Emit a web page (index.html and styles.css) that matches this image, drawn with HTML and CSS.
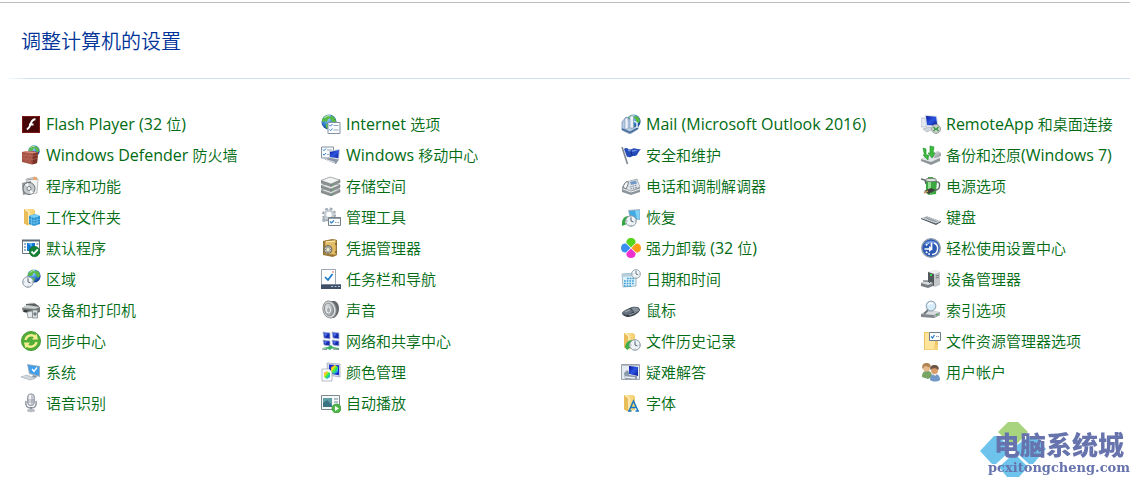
FILE: index.html
```html
<!DOCTYPE html>
<html lang="zh-CN">

<head>
  <meta charset="UTF-8">
  <meta name="viewport" content="width=device-width, initial-scale=1.0">
  <title>所有控制面板项</title>

  <link rel="stylesheet" href="styles.css">
</head>

<body>

  <!-- shared gradients and icon parts -->
  <svg class="defs" aria-hidden="true">
    <defs>
      <radialGradient id="sea" cx=".4" cy=".3" r=".7">
        <stop offset="0" stop-color="#a9ddfb" />
        <stop offset=".5" stop-color="#3b86d8" />
        <stop offset="1" stop-color="#123a94" />
      </radialGradient>
      <linearGradient id="screen" x2="1" y2="1">
        <stop offset="0" stop-color="#08149c" />
        <stop offset=".5" stop-color="#2c55e0" />
        <stop offset="1" stop-color="#0a1c98" />
      </linearGradient>
      <linearGradient id="metal" x2="1" y2="1">
        <stop offset="0" stop-color="#f4f5f6" />
        <stop offset="1" stop-color="#83888d" />
      </linearGradient>
      <linearGradient id="paper" x2="1">
        <stop offset="0" stop-color="#ffebad" />
        <stop offset="1" stop-color="#f4cc68" />
      </linearGradient>
      <linearGradient id="rainbow" x2="1" y2="1">
        <stop offset="0" stop-color="#f22" />
        <stop offset=".3" stop-color="#fd2" />
        <stop offset=".55" stop-color="#3e4" />
        <stop offset=".8" stop-color="#2ae" />
        <stop offset="1" stop-color="#a2e" />
      </linearGradient>
    </defs>
    <symbol id="globe" viewBox="0 0 14 14">
      <circle cx="7" cy="7" r="6.6" fill="url(#sea)" />
      <path d="M2 3.200 5 .8l2.400.5.8 2-2 1.200L5 7 2.600 6.400 1 7.500.8 5zM9 1.200l3 2 1.200 3-1.700 2.500-1.800-1-.7-2.500-1.300-1.200zM4 8.500l3.200.6.8 1.900-2 2.300-1.600-1.500z" fill="#58b947" />
      <path d="M3 3.500Q5 1 8 1.500" fill="none" stroke="#fff" stroke-opacity=".6" />
    </symbol>
    <symbol id="folder" viewBox="0 0 14 18">
      <path d="M1 1h9l2 1.500V16L5 17.500 1 15.500z" fill="url(#paper)" />
      <path d="M1 1l4 3v13.500l-4-2z" fill="#e9bd59" />
      <path d="M2 1.500l4 2.800V14" fill="none" stroke="#fff2c9" />
    </symbol>
    <symbol id="checklist" viewBox="0 0 13 12">
      <path d="M.5.5h12v11H.5z" fill="#fafcfe" stroke="#8393a5" />
      <path d="M2 3l1 1.200L5 2M2 7.500l1 1.200 2-2.200" fill="none" stroke="#2c7fd0" />
      <path d="M6 3.500h5M6 8h5" stroke="#97a8b8" />
    </symbol>
    <symbol id="clock" viewBox="0 0 12 12">
      <circle cx="6" cy="6" r="5.300" fill="#eef3f7" stroke="#8b9aa7" />
      <path d="M6 2.500V6l2.500 1" fill="none" stroke="#53606c" />
      <path d="M6 1.500v1M6 9.700v1M1.500 6h1M9.700 6h1" stroke="#6e7b86" stroke-width=".7" />
    </symbol>
  </svg>

  <main class="panel">

    <header class="panel-head">
      <h1>调整计算机的设置</h1>
    </header>

    <nav class="items" aria-label="控制面板项">

      <a class="item" href="#">
        <svg viewBox="0 0 20 20"><path d="M1 2h18v17H1z" fill="#460507" /><path d="M1.500 2.500h17v16h-17z" fill="none" stroke="#7c1714" /><path d="M14.500 5.300c-3 .1-3.800 1.700-4.700 4.300-.9 2.600-1.600 5-4 5.600M8 10.500h4.500" fill="none" stroke="#fff" stroke-width="2" /></svg>
        <span><span class="en">Flash Player (32 </span>位<span class="en">)</span></span>
      </a>
      <a class="item" href="#">
        <svg viewBox="0 0 20 20"><use href="#globe" x="0" y="0" width="16" height="16" /><path d="M7 9h13v10H7z" fill="#fff" /><use href="#checklist" x="6" y="8" width="14" height="12" /></svg>
        <span><span class="en">Internet </span>选项</span>
      </a>
      <a class="item" href="#">
        <svg viewBox="0 0 20 20"><use href="#globe" x="5" y="0" width="15" height="15" /><path d="M1 8l4-5 5 3v8l7-2v3l-8 5-8-4z" fill="#b6cce4" stroke="#6c87ab" stroke-width=".7" /><path d="M4 4h3v11H4zM9 2h3.500v12H9z" fill="#f7fbff" stroke="#7b95b8" stroke-width=".7" /><path d="M1 15l8 3.500 8-4.500" fill="none" stroke="#426997" stroke-width="1.500" /><path d="M6 7v6M11 5v7M13 7l3 2v5" fill="none" stroke="#e4eef9" stroke-width="1.500" /></svg>
        <span class="en">Mail (Microsoft Outlook 2016)</span>
      </a>
      <a class="item" href="#">
        <svg viewBox="0 0 20 20"><path d="M0 4h6v9H0z" fill="#e4e8ef" stroke="#aeb7c6" stroke-width=".7" /><path d="M4 1l12 1 1.500 11L5 12z" fill="#ced6e4" /><path d="M5 2l10 .8 1.300 8.700L6 11z" fill="url(#screen)" /><path d="M2 15l7-2 3 2-6 3z" fill="#d5d9df" stroke="#9ba3af" stroke-width=".6" /><circle cx="15" cy="15" r="4.500" fill="#c9cec9" stroke="#8e9690" stroke-width=".8" /><path d="M12.500 13l2 2-2 2M17.500 13l-2 2 2 2" fill="none" stroke="#2b9538" stroke-width="1.200" /></svg>
        <span><span class="en">RemoteApp </span>和桌面连接</span>
      </a>

      <a class="item" href="#">
        <svg viewBox="0 0 20 20"><use href="#globe" x="7" y="0" width="12" height="12" /><path d="M1 7l11-1 5 1.500-1 10.500-5 1.500L1 17z" fill="#a45143" /><path d="M12 7l5 .5-1 10.500-4.500 1.500z" fill="#7a3228" /><path d="M1 7l4-1 12 1.500-5 1z" fill="#d98c79" /><path d="M1 10l11 1M1 13.500l11 1M5 7.500v3M8.500 8v3M3 10.500v3M7 11v3M10 11v3M5 14v3M8.500 14.500v3M12 11l5-1.500M12 14.500l4.500-1.500" stroke="#c47b6b" stroke-width=".5" /></svg>
        <span><span class="en">Windows Defender </span>防火墙</span>
      </a>
      <a class="item" href="#">
        <svg viewBox="0 0 20 20"><use href="#checklist" x="0" y="1" width="13" height="13" /><path d="M8 6l11-2-1 10-10-1z" fill="#c2cbd8" /><path d="M9 7l9-2-.8 8L9 12z" fill="url(#screen)" /><path d="M3 14l6-1 9 1.500-3 4.500z" fill="#8d97a7" /><path d="M5 14.500l9 3" stroke="#dfe5ec" /></svg>
        <span><span class="en">Windows </span>移动中心</span>
      </a>
      <a class="item" href="#">
        <svg viewBox="0 0 20 20"><path d="M1 2l5.500 17" stroke="#7f8793" stroke-width="1.600" /><path d="M3 4c3-3 5 2 8 0s4 1 9 0c-2 2-3 4-4 6-3 2-4 0-6 2-2 1-3-1-4 0z" fill="#244bb7" /><path d="M7 4c2 0 3 2 5 1 2 0 3 0 5 0-3 2-6 2-10 1z" fill="#7392e7" /><path d="M10 5l1 6" stroke="#102c86" /></svg>
        <span>安全和维护</span>
      </a>
      <a class="item" href="#">
        <svg viewBox="0 0 20 20"><path d="M0 14l9-4 10 3v3l-9 4-10-4z" fill="#8f969a" /><path d="M0 14l9-4 10 3-9 4z" fill="#e0e4e6" /><path d="M10 8l7-2 3 2v3l-6 2-4-2z" fill="url(#metal)" /><path d="M2 3l3 1v6h2.500L7 15 2 10h1.500zM9 1l4 1-1 6h2l-3 5-4-5h2z" fill="#3ebd3d" stroke="#178a25" stroke-width=".6" /></svg>
        <span>备份和还原<span class="en">(Windows 7)</span></span>
      </a>

      <a class="item" href="#">
        <svg viewBox="0 0 20 20"><path d="M5 3l9-2 3 2-1 14-8 1z" fill="#f2f3f3" stroke="#a9acae" stroke-width=".8" /><path d="M6 4l9-1.500" stroke="#8e9295" /><path d="M1 7l9-2v12l-8 2z" fill="#909598" /><circle cx="8" cy="12.500" r="6" fill="#c5cacc" stroke="#686e71" /><path d="M8 12.500L4 8.500l3-1.500zM8 12.500l4.500 4-3 1.500z" fill="#fafcfc" /><circle cx="8" cy="12.500" r="2" fill="#f8f8f8" stroke="#74797c" /><path d="M12 1h4v3h-4z" fill="#e8a675" /></svg>
        <span>程序和功能</span>
      </a>
      <a class="item" href="#">
        <svg viewBox="0 0 20 20"><g stroke="#777c7e" stroke-width=".6"><path d="M0 14.500l10 3.500v2L0 16.500zM10 18l9-4v2l-9 4z" fill="#8c9292" /><path d="M0 14l9-3 10 2.500-9 4z" fill="#e3e7e7" /><path d="M0 9.500L10 13v2.500L0 12zM10 13l9-4v2.500l-9 4z" fill="#8c9292" /><path d="M0 9.500l9-3L19 9l-9 4z" fill="#e3e7e7" /><path d="M0 4.500L10 8v2.500L0 7zM10 8l9-4v2.500l-9 4z" fill="#8c9292" /><path d="M0 4.500L9 1l10 3-9 4z" fill="#f2f4f4" /></g><path d="M12 8.500v1M12 13.500v1M12 18v1" stroke="#38b54a" stroke-width="1.300" /></svg>
        <span>存储空间</span>
      </a>
      <a class="item" href="#">
        <svg viewBox="0 0 20 20"><path d="M1 12l4-6 11-3 3 9v4l-9 3-9-3z" fill="#8d959c" /><path d="M1 12l4-6 11-3 3 8-9 4z" fill="#dfe4e8" stroke="#8f979f" stroke-width=".6" /><path d="M9 6l6-1.500 1 3-6 1.500z" fill="#6f9bc8" /><path d="M2 11c2-5 4-6 5-5s-1 5-2 7z" fill="#f7f9fa" stroke="#72797f" /><path d="M9 11l7-2M9.500 13l7-2" stroke="#7c858e" stroke-dasharray="1.500 1" /><path d="M2 13l8 3 9-3" fill="none" stroke="#f2f4f5" /></svg>
        <span>电话和调制解调器</span>
      </a>
      <a class="item" href="#">
        <svg viewBox="0 0 20 20"><path d="M5 4l2-1V1h5v2l4 2-1 13-7 1-3-2z" fill="#3aa83f" /><path d="M7 3h3v15l-3-1z" fill="#91df8e" /><ellipse cx="10" cy="4" rx="5.500" ry="1.800" fill="#dce2dd" stroke="#727d75" /><path d="M0 3l4 1 1 4M15 6c4-1 4 3 3 6s-6 2-9 3" fill="none" stroke="#5d6667" stroke-width="1.400" /><path d="M3 15l7-3 4 2-6 4z" fill="#3b3b37" /><path d="M3 17l4-2" stroke="#c59a5b" stroke-width="1.500" /></svg>
        <span>电源选项</span>
      </a>

      <a class="item" href="#">
        <svg viewBox="0 0 20 20"><use href="#folder" x="2" y="1" width="14" height="18" /><path d="M8 9l6-2 5 2v8l-6 2-5-2z" fill="#238fd0" /><path d="M8 9l6-2 5 2-6 2z" fill="#76cdf3" /><path d="M8 12l5 2 6-2M8 14.500l5 2 6-2M10.500 10v8M13 11v8M16 10v8" fill="none" stroke="#8bd1f2" stroke-width=".6" /></svg>
        <span>工作文件夹</span>
      </a>
      <a class="item" href="#">
        <svg viewBox="0 0 20 20"><circle cx="8" cy="7.500" r="5.500" fill="none" stroke="#9da7b0" stroke-width="3" stroke-dasharray="2.500 1.820" /><circle cx="8" cy="7.500" r="4" fill="none" stroke="#c3cbd2" stroke-width="2.500" /><circle cx="3" cy="13" r="2" fill="#a9b2ba" /><path d="M7.500 10.500h12v8h-12z" fill="#fbfcfc" stroke="#74818b" /><path d="M7.500 11h12" stroke="#74818b" stroke-width="1.500" /><path d="M9 14.500l1.500 1.500L13 13.500" fill="none" stroke="#277fc7" stroke-width="1.200" /><path d="M14 15.500h4" stroke="#9ba7b0" stroke-dasharray="1.500 1" /></svg>
        <span>管理工具</span>
      </a>
      <a class="item" href="#">
        <svg viewBox="0 0 20 20"><path d="M7 3l12-1v11l-10-1z" fill="#a6b5c2" /><path d="M8 4l10.500-1v9.500L9.500 11z" fill="#3faae4" /><path d="M14 3.500l4.500-.5v9.500L16 12z" fill="#83d1f5" /><path d="M1 15c1-4 3-6 7-6l-1 3c-2 0-3 2-3 4l2 1-5 2z" fill="#33a63f" /><use href="#clock" x="4" y="8" width="12" height="12" /></svg>
        <span>恢复</span>
      </a>
      <a class="item" href="#">
        <svg viewBox="0 0 20 20"><path d="M0 11l6-2 14 5-5 3z" fill="#d5d9dc" /><path d="M0 11l15 5.500 5-2.500v1l-5 3L0 12z" fill="#4d575d" /><path d="M3 11l4-1.200M5 12l4-1.500M7 12.700l4-1.500M9 13.500l4-1.500M11 14l4-1.200M13 15l4-1.500M4 10.500l12 4.500" stroke="#7d898f" stroke-width=".6" /></svg>
        <span>键盘</span>
      </a>

      <a class="item" href="#">
        <svg viewBox="0 0 20 20"><path d="M1.500 2.500h17v13h-17z" fill="#fff" stroke="#69747d" /><path d="M1 2.500h18" stroke="#5e6c78" stroke-width="2" /><path d="M6 5h8v8H6z" fill="#1379d1" /><path d="M7 5l4 4V5z" fill="#58b4ee" /><path d="M3 6h2M3 9h2M3 12h2M15.500 6h2" stroke="#7a99b4" stroke-width="1.300" /><circle cx="13.500" cy="13.500" r="5.200" fill="#128336" stroke="#0b6426" stroke-width=".6" /><path d="M10.500 13.500l2.300 2.300 4-4.500" fill="none" stroke="#fff" stroke-width="1.800" /></svg>
        <span>默认程序</span>
      </a>
      <a class="item" href="#">
        <svg viewBox="0 0 20 20"><path d="M2 3l9-2 5 1v15l-4 2-10-2z" fill="#967539" /><path d="M4 3l11-1v15L4 16z" fill="#e3bd66" stroke="#aa8137" stroke-width=".7" /><path d="M5 4l9-1" stroke="#fff0bc" /><circle cx="7" cy="11.500" r="4" fill="#d3d3c9" stroke="#6b685b" /><path d="M4.500 9l5 5M9.500 9l-5 5M7 8v7M3.500 11.500h7" stroke="#716a50" stroke-width=".8" /><circle cx="7" cy="11.500" r="1.500" fill="#f5f1da" /><path d="M15 5v2M15 13v2" stroke="#775c29" stroke-width="1.500" /></svg>
        <span>凭据管理器</span>
      </a>
      <a class="item" href="#">
        <svg viewBox="0 0 20 20"><path d="M10 9.500L5.500 5C5 2 7 0 10 0s5 2 4.500 5z" fill="#57d51b" /><path d="M10 10.500L5.500 15c-.5 3 1.500 5 4.500 5s5-2 4.500-5z" fill="#ed2fd0" /><path d="M9.500 10L5 5.500C2 5 0 7 0 10s2 5 5 4.500z" fill="#3a8df2" /><path d="M10.500 10L15 5.500c3-.5 5 1.500 5 4.500s-2 5-5 4.500z" fill="#ff9c16" /></svg>
        <span>强力卸载<span class="en"> (32 </span>位<span class="en">)</span></span>
      </a>
      <a class="item" href="#">
        <svg viewBox="0 0 20 20"><circle cx="10" cy="10" r="9.300" fill="#2c59b3" stroke="#929fae" stroke-width="1.300" /><path d="M3 7a8 8 0 0 1 14 0q-7-3-14 0z" fill="#6a94df" /><path d="M3.500 11H10M10.500 10V4.500" fill="none" stroke="#fff" stroke-width="1.700" /><path d="M8 8l4 3-4 3z" fill="#fff" /><path d="M13 5a6 6 0 0 1-2 11.500" fill="none" stroke="#fff" stroke-width="1.500" /><path d="M5 13.500a6 6 0 0 0 4 2.700M5 7.500l2.500-2.500" fill="none" stroke="#fff" stroke-width="1.500" stroke-dasharray="2 1" /></svg>
        <span>轻松使用设置中心</span>
      </a>

      <a class="item" href="#">
        <svg viewBox="0 0 20 20"><use href="#globe" x="6" y="0" width="14" height="14" /><use href="#clock" x="1" y="7" width="12" height="12" /></svg>
        <span>区域</span>
      </a>
      <a class="item" href="#">
        <svg viewBox="0 0 20 20"><path d="M.5.500h14v16H.5z" fill="#fff" stroke="#9ca7b2" /><path d="M4 8l3 3 4.500-6" fill="none" stroke="#1679c9" stroke-width="1.700" /><path d="M11 3h2" stroke="#df6466" /><path d="M0 15h20v5H0z" fill="#3f5066" /><path d="M0 15h20v1H0z" fill="#73849b" /><path d="M10 17.500h2M13.500 17.500h2M17 17.500h2" stroke="#b4c3d2" /></svg>
        <span>任务栏和导航</span>
      </a>
      <a class="item" href="#">
        <svg viewBox="0 0 20 20"><path d="M1 5l14-1v13l-13 1z" fill="#dff1fa" stroke="#8ca6b5" stroke-width=".8" /><path d="M1 5l14-1v3L1.500 8z" fill="#b7cfdd" /><path d="M6 9.500h7M3 12h10M3 14.500h10M3 17h7" stroke="#379ed4" stroke-width="1.700" stroke-dasharray="1.700 1" /><use href="#clock" x="10" y="0" width="10" height="10" /></svg>
        <span>日期和时间</span>
      </a>
      <a class="item" href="#">
        <svg viewBox="0 0 20 20"><path d="M7 3l8-2 4 2v13l-5 2-7-3z" fill="#c3c7ca" /><path d="M7 3l8-2 4 2-6 2z" fill="#eff1f2" /><path d="M7 3l6 2v12l-6-2z" fill="#51585b" /><path d="M9 6h2" stroke="#39d54c" stroke-width="2" /><path d="M15 7l3-1M15 9l3-1" stroke="#747a80" /><path d="M0 14l6-2 6 2v3l-5 2-7-2z" fill="#777e83" /><path d="M0 14l6-2 6 2-5 2z" fill="#d7dadd" /><path d="M2 12h5l2 2" fill="none" stroke="#4e565d" /></svg>
        <span>设备管理器</span>
      </a>

      <a class="item" href="#">
        <svg viewBox="0 0 20 20"><path d="M5 4l8-1 5 3v4l-7 1-6-3z" fill="#59605f" /><path d="M1 8l5-3 13 2v5l-5 2-12-2z" fill="#6e7472" /><path d="M1 8l5-3 13 2-5 2z" fill="#c9cfcd" /><path d="M3 11l8 1" stroke="#303534" stroke-width="2" /><path d="M6 12l5-1 1 6-5 1z" fill="#e6eaec" stroke="#8b9599" stroke-width=".8" /><path d="M11.500 10h5v8h-5z" fill="#dbe0e2" stroke="#7c8588" stroke-width=".8" /><circle cx="14" cy="14" r="1.700" fill="#6e7b83" /><path d="M9 3l4 0" stroke="#d2d8d7" /></svg>
        <span>设备和打印机</span>
      </a>
      <a class="item" href="#">
        <svg viewBox="0 0 20 20"><path d="M9 1h5c3 2 4 4 4 8s-2 7-5 9H9z" fill="#62686c" /><ellipse cx="8.500" cy="9.500" rx="6.500" ry="8.600" transform="rotate(-12 8.500 9.500)" fill="#dde0e1" stroke="#8c9195" /><ellipse cx="8" cy="9.500" rx="4.500" ry="6.500" transform="rotate(-12 8 9.500)" fill="url(#metal)" stroke="#777d81" stroke-width=".8" /><ellipse cx="7.500" cy="10" rx="2" ry="3" fill="#a5abae" stroke="#eef0f1" /></svg>
        <span>声音</span>
      </a>
      <a class="item" href="#">
        <svg viewBox="0 0 20 20"><path d="M1 13c1-2 5-4 10-6 4-1 8 0 8 3-1 3-6 6-11 7-4 0-7-2-7-4z" fill="#39434e" /><path d="M1 12.500c2-2 5-3 8-4l3 3c-3 3-6 4-8 3-2 0-3-1-3-2z" fill="#66727e" /><path d="M10 8c4-2 8 0 8 1-1 2-3 3-5 3z" fill="#84909b" /><path d="M4 12l5-2M8 15c4-1 8-3 10-5" fill="none" stroke="#c0cad2" stroke-width=".7" /></svg>
        <span>鼠标</span>
      </a>
      <a class="item" href="#">
        <svg viewBox="0 0 20 20"><path d="M0 14l6-3 13 1v3l-6 3-13-1z" fill="#80868b" /><path d="M0 14l6-3 13 1-6 3z" fill="#d9dddf" /><path d="M13 15l6-3v3l-6 3z" fill="#a7aeb2" /><circle cx="10" cy="6" r="4.800" fill="#d7edfb" stroke="#9aadbb" stroke-width="1.200" /><path d="M7 5q2-3 5-1" fill="none" stroke="#fff" stroke-width="1.300" /><path d="M7 10l-4 4" stroke="#707a80" stroke-width="2" /><path d="M15 15l2-1" stroke="#32aa48" stroke-width="1.300" /></svg>
        <span>索引选项</span>
      </a>

      <a class="item" href="#">
        <svg viewBox="0 0 20 20"><circle cx="10" cy="10" r="9.500" fill="#50ae39" stroke="#459a30" /><path d="M4.500 9A6 6 0 0 1 14 5.500M15.500 11A6 6 0 0 1 6 14.500" fill="none" stroke="#f7ed91" stroke-width="2.300" /><path d="M11 8.500h6l-1.500-6zM9 11.500H3l1.500 6z" fill="#f7ed91" /></svg>
        <span>同步中心</span>
      </a>
      <a class="item" href="#">
        <svg viewBox="0 0 20 20"><path d="M2 1l7 1v6L3 7zM11 1l7 1v6l-6-1zM2 9l7 1v5l-6-1zM11 9l7 1v5l-6-1z" fill="#182bb0" stroke="#a6b5d0" stroke-width=".8" /><path d="M3 2l4 .6L4 6zM12 2l4 .6-3 3.400zM3 10l4 .6-3 2.400zM12 10l4 .6-3 2.400z" fill="#5272ea" /><path d="M1 17l6-1 3-2 2 2 6 1v1l-7-.5-2 1.500-2-1z" fill="#3caf62" /><path d="M1 18l5 .5M12 18l6 .5" stroke="#73848a" /></svg>
        <span>网络和共享中心</span>
      </a>
      <a class="item" href="#">
        <svg viewBox="0 0 20 20"><use href="#folder" x="2" y="1" width="14" height="18" /><path d="M4 16c1-4 3-7 7-7v3c-3 0-3 2-3 4h2l-4 3z" fill="#3dae4d" /><use href="#clock" x="8" y="8" width="12" height="12" /></svg>
        <span>文件历史记录</span>
      </a>
      <a class="item" href="#">
        <svg viewBox="0 0 20 20"><path d="M3 1h12l2 2v16H3z" fill="#ecc568" /><path d="M4 2h10v16H4z" fill="#ffe49b" /><path d="M4 18h9v-4h4v5H4z" fill="#f5d17a" /><path d="M8.500 1.500h11v8h-11z" fill="#fff" stroke="#6c7d8c" /><path d="M10 5.500l1.500 1.500 2-3" fill="none" stroke="#277bd0" stroke-width="1.300" /><path d="M15 5.500h3" stroke="#8799a9" stroke-dasharray="1.200 .6" /></svg>
        <span>文件资源管理器选项</span>
      </a>

      <a class="item" href="#">
        <svg viewBox="0 0 20 20"><path d="M6 2l13 2v11L8 12z" fill="#9dadb9" /><path d="M7 3l11 1.700v8.800L9 11z" fill="#3f9fed" /><path d="M11 7l2 2.500 3-4" fill="none" stroke="#fff" stroke-width="1.300" /><path d="M12 13l4 1-1 2-4-1z" fill="#8998a4" /><path d="M0 15l6-2 8 3.500L9 18z" fill="#e4e9ec" stroke="#9fabb4" stroke-width=".7" /><path d="M3 15l8 2M5 14l7 2" stroke="#b5c0c6" stroke-width=".6" /></svg>
        <span>系统</span>
      </a>
      <a class="item" href="#">
        <svg viewBox="0 0 20 20"><path d="M6 1l13 1v13L7 13z" fill="#dce1e8" stroke="#98a4b2" stroke-width=".7" /><path d="M8 2.500l10 .8v10L8 11.500z" fill="#1630cf" /><path d="M10 5l4-2 3 2v5l-4 2-3-2z" fill="url(#rainbow)" /><path d="M1 7h7l3 3v9H1z" fill="#fafcff" stroke="#a5afba" stroke-width=".8" /><path d="M3 11l3-2 3 2v4l-3 2-3-2z" fill="url(#rainbow)" /></svg>
        <span>颜色管理</span>
      </a>
      <a class="item" href="#">
        <svg viewBox="0 0 20 20"><path d="M.5 2.500h18v15H.5z" fill="#e6ebf1" stroke="#9aa2aa" /><path d="M1 3.500h17" stroke="#b5bdc5" /><path d="M8 4l9 1v9l-9-2z" fill="url(#screen)" /><path d="M3 11l3-3 2 2v3l8 1v3H4z" fill="#8b98a9" /><path d="M4 15l10 1" stroke="#edf1f5" stroke-width="1.500" /></svg>
        <span>疑难解答</span>
      </a>
      <a class="item" href="#">
        <svg viewBox="0 0 20 20"><path d="M1 15c0-5 2-6 5-6s5 1 5 6l-4 2z" fill="#78a563" /><circle cx="5.500" cy="6" r="3.500" fill="#e7b98d" /><path d="M1.500 7c-1-4 1-6 4-6s5 2 4 5C8 5 6 4 4 4z" fill="#b18454" /><path d="M9 18c0-4 2-6 5-6s5 2 5 6c-3 2-7 2-10 0z" fill="#7298c5" /><circle cx="13.500" cy="8.500" r="3.500" fill="#d99c6b" /><path d="M9.500 8c-1-3 1-5 4-5s5 2 4 5c-2-2-5-2-7-1z" fill="#6c5645" /><path d="M12 12l2 2 2-2" fill="#f6eee7" /></svg>
        <span>用户帐户</span>
      </a>

      <a class="item" href="#">
        <svg viewBox="0 0 20 20"><path d="M5 8c-1 5 1 7 5 7s6-2 5-7" fill="none" stroke="#8d949d" stroke-width="1.500" /><path d="M9 14h2v3H9z" fill="#838a92" /><ellipse cx="10" cy="17.500" rx="4" ry="1.700" fill="#b8bcc3" /><rect x="6.500" y=".8" width="7" height="12" rx="3.500" fill="#c6c8d2" stroke="#8a8e99" stroke-width=".8" /><path d="M9 2v9" stroke="#fff" stroke-width="1.500" /><path d="M7 7h6M7 9h6" stroke="#888e99" stroke-width=".7" /></svg>
        <span>语音识别</span>
      </a>
      <a class="item" href="#">
        <svg viewBox="0 0 20 20"><path d="M.5 2.500h18v14H.5z" fill="#f6f8f9" stroke="#7c8991" /><path d="M2 5h9v9H2z" fill="#5f9fa5" /><path d="M2 10l4-3 5 5v2H2z" fill="#3b7482" /><path d="M13 6h4M13 9h4" stroke="#9badb5" stroke-width="1.500" /><circle cx="15.500" cy="15.500" r="4.500" fill="#4eb846" stroke="#348f31" stroke-width=".7" /><path d="M14 13l4 2.500-4 2.500z" fill="#fff" /></svg>
        <span>自动播放</span>
      </a>
      <a class="item" href="#">
        <svg viewBox="0 0 20 20"><use href="#folder" x="2" y="1" width="14" height="18" /><path d="M8 18L12.500 8l4.500 10M10 14.500h5M7 18h3.500M14.500 18H18" fill="none" stroke="#1878c1" stroke-width="1.500" /></svg>
        <span>字体</span>
      </a>

    </nav>

  </main>

  <div class="watermark">
    <svg viewBox="0 0 150 56" aria-hidden="true">
      <path d="M28 1h10l10 10-11 12H30L18 11z" fill="#a9d47f" />
      <path d="M14 15h4l10 9v8L16 43h-4L0 30z" fill="#6dc3ec" />
      <path d="M50 15h4l12 13-13 15h-4L37 32v-8z" fill="#6dc3ec" />
      <path d="M30 36h8l10 10-9 10H27l-8-10z" fill="#6dc3ec" />
    </svg>
    <span class="mark-name">电脑系统城</span>
    <span class="mark-site">pcxitongcheng.com</span>
  </div>

</body>

</html>
```
FILE: styles.css
```css
* {
  box-sizing: border-box;
}

body {
  margin: 0;
  padding-top: 2px;
  background-color: #fff;
  font-family: "Open Sans", "Noto Sans CJK SC", sans-serif;
  font-size: 15px;
}

.defs {
  position: absolute;
  width: 0;
  height: 0;
}

.panel {
  border-top: 1px solid #bcbcbc;
}

.panel-head {
  padding: 23px 21px 21px;
  border-bottom: 1px solid;
  border-image: linear-gradient(to right, #fff 5px, #cfe0f3 30px) 1;
}

.panel-head h1 {
  margin: 0;
  color: #003399;
  font-size: 20px;
  font-weight: 350;
  line-height: 31px;
}

/* last column only needs the width of its longest label */
.items {
  display: grid;
  grid-template-columns: repeat(3, 1fr) 209px;
  padding: 29px 0 60px 21px;
}

.item {
  display: flex;
  align-items: center;
  gap: 5px;
  height: 31px;
  color: #006b12;
  font-weight: 350;
  text-decoration: none;
  white-space: nowrap;
}

.item:hover {
  text-decoration: underline;
}

.item svg {
  flex: none;
  width: 20px;
  height: 20px;
}

.en {
  font-size: 16px;
  font-weight: 400;
}

.watermark {
  position: fixed;
  right: 0;
  bottom: 0;
  display: flex;
  flex-direction: column;
  align-items: flex-end;
  width: 150px;
  padding-top: 8px;
  color: #6673ad;
  font-weight: 700;
  pointer-events: none;
}

.watermark svg {
  position: absolute;
  top: 0;
  left: 0;
  width: 150px;
  height: 56px;
}

.watermark span {
  position: relative;
}

.mark-name {
  padding-right: 6px;
  font-family: "Noto Sans CJK SC", sans-serif;
  font-size: 26px;
  font-weight: 900;
  line-height: 30px;
}

.mark-site {
  font-family: "DejaVu Serif", serif;
  font-size: 13px;
  line-height: 18px;
}
```
